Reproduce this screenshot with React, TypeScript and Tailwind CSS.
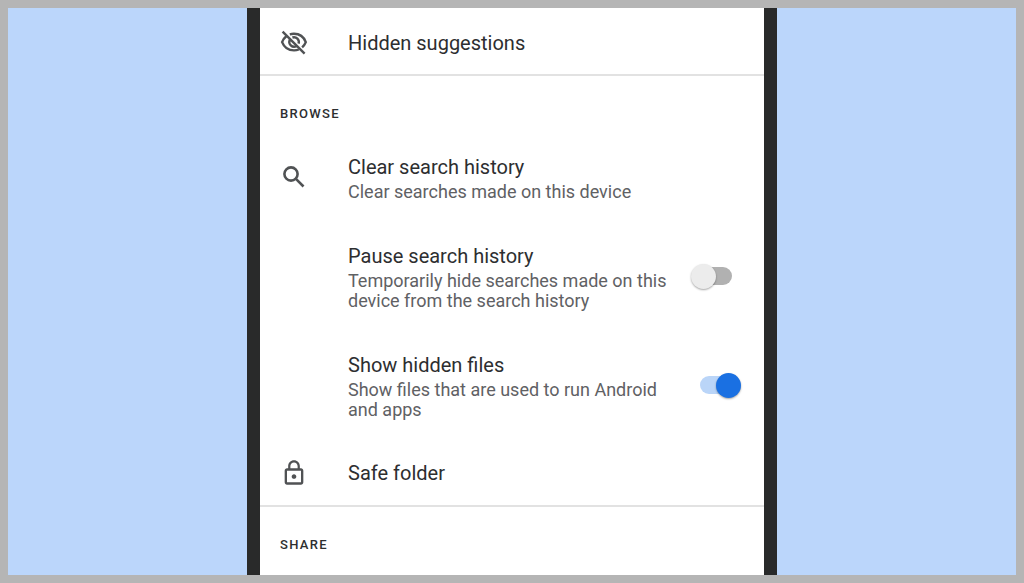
import { useState } from "react";
import type { ReactNode } from "react";
import { MdLockOutline } from "react-icons/md";

const HiddenIcon: React.FC = () => (
  <svg
    width="28"
    height="28"
    viewBox="0 0 28 28"
    fill="none"
    stroke="currentColor"
    strokeWidth="2.4"
    aria-hidden="true"
  >
    <path d="M9.8 5.4A13 13 0 0 1 14 4.8c5.4 0 9.8 3.2 11.8 8.3a13 13 0 0 1-3.7 5.2" />
    <path d="M6.3 7.2a13 13 0 0 0-4.2 5.9c2 5.1 6.5 8.3 11.9 8.3 1.8 0 3.4-.3 4.9-.9" />
    <path d="M12.4 8.5a4.9 4.9 0 0 1 6.2 6.2" />
    <path d="M9.9 10.6a4.9 4.9 0 0 0 6.6 6.6" />
    <path d="M2.6 2.6 24.6 24.6" />
  </svg>
);

const SearchIcon: React.FC = () => (
  <svg
    width="28"
    height="28"
    viewBox="0 0 28 28"
    fill="none"
    stroke="currentColor"
    strokeWidth="2.6"
    className="mb-[3px]"
    aria-hidden="true"
  >
    <circle cx="11" cy="11" r="6.6" />
    <path d="M15.700 15.700 23.500 23.500" />
  </svg>
);

interface RowTextProps {
  title: string;
  description?: string;
}

const RowText: React.FC<RowTextProps> = ({ title, description }) => (
  <span className="block min-w-0 flex-1">
    <span className="block text-xl/6 text-[#2d2e30]">{title}</span>
    {description && (
      <span className="mt-[3px] block text-lg/5 text-[#5f6164]">
        {description}
      </span>
    )}
  </span>
);

interface ActionRowProps extends RowTextProps {
  icon: ReactNode;
  className: string;
}

const ActionRow: React.FC<ActionRowProps> = ({
  icon,
  className,
  ...text
}) => (
  <button
    type="button"
    className={`flex w-full cursor-pointer items-center pr-6 pl-5 text-left ${className}`}
  >
    <span className="flex w-[68px] flex-none text-[#505254]">{icon}</span>
    <RowText {...text} />
  </button>
);

interface SwitchRowProps extends RowTextProps {
  id: string;
  initial: boolean;
}

const SwitchRow: React.FC<SwitchRowProps> = ({ id, initial, ...text }) => {
  const [checked, setChecked] = useState(initial);

  return (
    <div className="flex items-center pt-[21px] pr-[23px] pb-[21px] pl-[88px]">
      <label htmlFor={id} className="min-w-0 flex-1 cursor-pointer pr-4">
        <RowText {...text} />
      </label>
      <input
        id={id}
        type="checkbox"
        role="switch"
        checked={checked}
        onChange={(e) => setChecked(e.target.checked)}
        className="relative mb-[3px] h-[25px] w-[50px] flex-none cursor-pointer appearance-none before:absolute before:top-[3px] before:left-[9px] before:h-[18px] before:w-8 before:rounded-full before:bg-[#b1b1b1] after:absolute after:top-0 after:left-0 after:size-[25px] after:rounded-full after:bg-[#ececec] after:shadow-[0_1px_2px_rgba(0,0,0,0.35)] checked:before:bg-[#bad5f8] checked:after:left-[25px] checked:after:bg-[#1a70e2]"
      />
    </div>
  );
};

const SectionHeader: React.FC<{ children: string }> = ({ children }) => (
  <h2 className="px-5 pt-[30px] pb-3 text-[13px]/4 font-medium tracking-widest text-[#2d2e30]">
    {children}
  </h2>
);

export default function App() {
  return (
    <div className="flex min-h-screen justify-center border-8 border-[#b5b5b5] bg-[#bbd6fb] font-[Roboto,sans-serif]">
      <main className="w-full max-w-[530px] border-x-[13px] border-[#292a2a] bg-white">
        <section className="border-b-2 border-[#e2e2e2]">
          <ActionRow
            icon={<HiddenIcon />}
            title="Hidden suggestions"
            className="pt-[21px] pb-[17px]"
          />
        </section>
        <section className="border-b-2 border-[#e2e2e2]">
          <SectionHeader>BROWSE</SectionHeader>
          <ActionRow
            icon={<SearchIcon />}
            title="Clear search history"
            description="Clear searches made on this device"
            className="pt-[21px] pb-[21px]"
          />
          <SwitchRow
            id="pause-history"
            title="Pause search history"
            description="Temporarily hide searches made on this device from the search history"
            initial={false}
          />
          <SwitchRow
            id="hidden-files"
            title="Show hidden files"
            description="Show files that are used to run Android and apps"
            initial={true}
          />
          <ActionRow
            icon={<MdLockOutline size={28} />}
            title="Safe folder"
            className="pt-[18px] pb-[18px]"
          />
        </section>
        <section>
          <SectionHeader>SHARE</SectionHeader>
        </section>
      </main>
    </div>
  );
}
